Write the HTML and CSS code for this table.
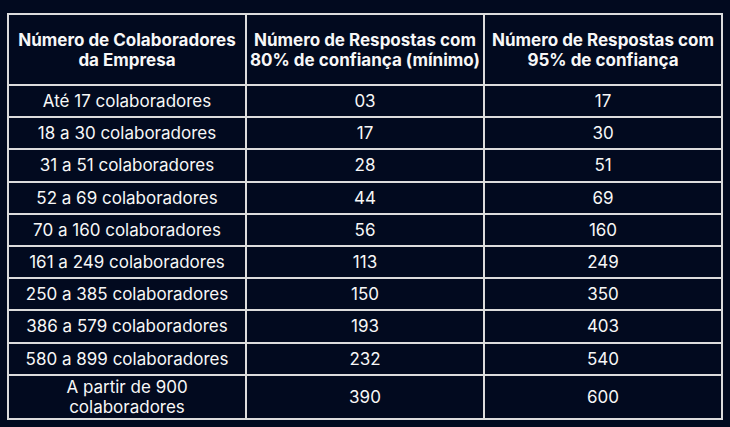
FILE: index.html
```html
<!DOCTYPE html>
<html lang="pt">
<head>
<meta charset="utf-8">
<link rel="stylesheet" href="styles.css">
</head>
<body>
<table class="grid">
  <colgroup><col class="c"><col class="c"><col class="c"></colgroup>
  <thead>
    <tr class="head">
      <th>Número de Colaboradores<br>da Empresa</th>
      <th>Número de Respostas com<br>80% de confiança (mínimo)</th>
      <th>Número de Respostas com<br>95% de confiança</th>
    </tr>
  </thead>
  <tbody>
    <tr><td>Até 17 colaboradores</td><td>03</td><td>17</td></tr>
    <tr><td>18 a 30 colaboradores</td><td>17</td><td>30</td></tr>
    <tr><td>31 a 51 colaboradores</td><td>28</td><td>51</td></tr>
    <tr><td>52 a 69 colaboradores</td><td>44</td><td>69</td></tr>
    <tr><td>70 a 160 colaboradores</td><td>56</td><td>160</td></tr>
    <tr><td>161 a 249 colaboradores</td><td>113</td><td>249</td></tr>
    <tr><td>250 a 385 colaboradores</td><td>150</td><td>350</td></tr>
    <tr><td>386 a 579 colaboradores</td><td>193</td><td>403</td></tr>
    <tr><td>580 a 899 colaboradores</td><td>232</td><td>540</td></tr>
    <tr class="last"><td>A partir de 900<br>colaboradores</td><td>390</td><td>600</td></tr>
  </tbody>
</table>
</body>
</html>
```

FILE: styles.css
```css
html, body {
  margin: 0;
  padding: 0;
  background: #020a1f;
}
body {
  padding: 13px 0 0 7px;
  font-family: Inter, "Noto Sans", sans-serif;
  color: #f7f7f7;
}
.grid {
  border-collapse: collapse;
  table-layout: fixed;
  width: 714px;
  font-size: 17px;
  line-height: 20px;
}
.c { width: 238px; }
.grid th, .grid td {
  border: 2px solid #dcdcdc;
  text-align: center;
  vertical-align: middle;
  padding: 0 2px;
}
.grid th {
  font-weight: 700;
}
.head { height: 71px; }
.grid tbody tr { height: 32.2px; }
.grid tbody tr.last { height: 44px; }
```
